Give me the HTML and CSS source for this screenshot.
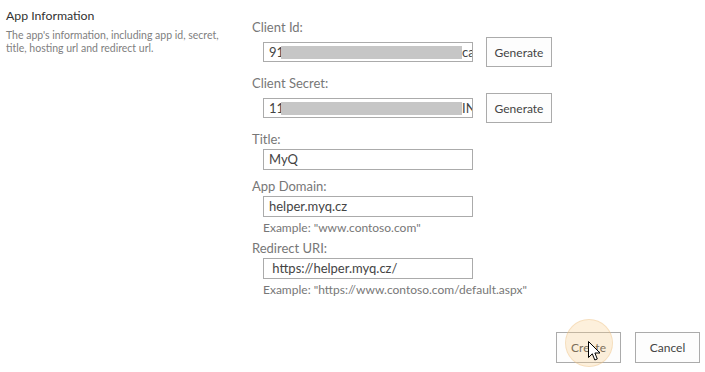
FILE: index.html
```html
<!DOCTYPE html>
<html lang="en">
<head>
    <meta charset="UTF-8">
    <title>App Information</title>
    <link rel="stylesheet" href="styles.css">
</head>
<body>
    <div class="page">
        <div class="section-info">
            <h2>App Information</h2>
            <p>The app's information, including app id, secret, title, hosting url and redirect url.</p>
        </div>

        <div class="section-fields">
            <div class="field">
                <label>Client Id:</label>
                <div class="field-row">
                    <div class="text-box"><span class="value">91</span><span class="redact"></span><span class="value">ca</span></div>
                    <button class="btn">Generate</button>
                </div>
            </div>

            <div class="field">
                <label>Client Secret:</label>
                <div class="field-row">
                    <div class="text-box"><span class="value">11</span><span class="redact"></span><span class="value">IN</span></div>
                    <button class="btn">Generate</button>
                </div>
            </div>

            <div class="field">
                <label>Title:</label>
                <div class="text-box plain">MyQ</div>
            </div>

            <div class="field with-hint">
                <label>App Domain:</label>
                <div class="text-box plain">helper.myq.cz</div>
                <div class="hint">Example: "www.contoso.com"</div>
            </div>

            <div class="field with-hint">
                <label>Redirect URI:</label>
                <div class="text-box plain">&nbsp;https://helper.myq.cz/</div>
                <div class="hint">Example: "https://www.contoso.com/default.aspx"</div>
            </div>
        </div>
    </div>

    <div class="actions">
        <button class="btn btn-wide create">Create
            <span class="click-ring"></span>
            <svg class="cursor" width="13" height="21" viewBox="0 0 13 21">
                <path d="M0.5 0.5 L0.5 16.5 L4.3 12.8 L6.8 19 L9.3 18 L6.9 12 L12 12 Z" fill="#fff" stroke="#000" stroke-width="1" stroke-linejoin="miter"/>
            </svg>
        </button>
        <button class="btn btn-wide">Cancel</button>
    </div>
</body>
</html>
```

FILE: styles.css
```css
* {
    margin: 0;
    padding: 0;
    box-sizing: border-box;
}

body {
    background: #fff;
    color: #333;
    font-family: Lato, "Open Sans", Arial, sans-serif;
    width: 705px;
    height: 372px;
    overflow: hidden;
}

.page {
    display: flex;
    padding-top: 8px;
}

.section-info {
    width: 252px;
    padding-left: 6px;
}

.section-info h2 {
    font-size: 12.3px;
    font-weight: normal;
    line-height: 16px;
    color: #333;
}

.section-info p {
    margin-top: 5px;
    font-size: 10.5px;
    line-height: 13px;
    color: #808080;
    width: 225px;
}

.section-fields {
    flex: 1;
    padding-top: 11px;
}

.field {
    margin-bottom: 8px;
}

.field.with-hint {
    margin-bottom: 4px;
}

.field label {
    display: block;
    font-size: 13px;
    line-height: 16px;
    color: #777;
}

.field-row {
    display: flex;
    align-items: center;
    margin-top: 2px;
}

.text-box {
    width: 210px;
    height: 20px;
    margin-left: 11px;
    border: 1px solid #ababab;
    padding: 0 5px;
    font-size: 13px;
    line-height: 18px;
    color: #444;
    white-space: nowrap;
    overflow: hidden;
    display: flex;
    align-items: center;
}

.text-box.plain {
    margin-top: 2px;
    height: 21px;
    display: block;
}

.redact {
    display: inline-block;
    width: 181px;
    height: 13px;
    margin-left: -3px;
    background: #c6c6c6;
    flex-shrink: 0;
}

.value {
    flex-shrink: 0;
}

.hint {
    margin: 3px 0 0 11px;
    font-size: 12px;
    line-height: 16px;
    color: #777;
}

.btn {
    background: #fdfdfd;
    border: 1px solid #ababab;
    color: #444;
    font-family: inherit;
    font-size: 12px;
    height: 30px;
    width: 66px;
    margin-left: 13px;
}

.actions {
    display: flex;
    justify-content: flex-end;
    gap: 14px;
    padding-right: 5px;
    margin-top: 30px;
}

.btn-wide {
    width: 65px;
    height: 31px;
    margin-left: 0;
}

.create {
    position: relative;
}

.click-ring {
    position: absolute;
    left: 8px;
    top: -14px;
    width: 48px;
    height: 48px;
    border-radius: 50%;
    background: rgba(250, 205, 140, 0.3);
    border: 1px solid rgba(235, 190, 130, 0.35);
}

.cursor {
    position: absolute;
    left: 31px;
    top: 8px;
}
```
